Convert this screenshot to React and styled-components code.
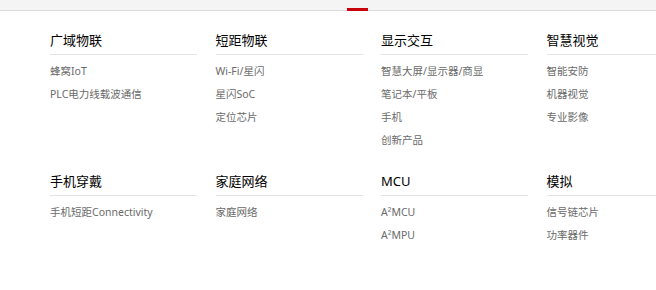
import React from "react";
import styled, { createGlobalStyle } from "styled-components";

const GlobalStyle = createGlobalStyle`
    html, body {
        margin: 0;
        padding: 0;
        background: #fff;
        font-family: "Noto Sans", "Noto Sans CJK SC", sans-serif;
    }
`;

const Page = styled.div`
    width: 656px;
    height: 290px;
    overflow: hidden;
    background: #fff;
`;

const TopBar = styled.div`
    position: relative;
    height: 10px;
    background: #f4f4f4;
    border-bottom: 1px solid #dcdcdc;
`;

const Indicator = styled.span`
    position: absolute;
    left: 347px;
    top: 8px;
    width: 21px;
    height: 3px;
    background: #c8000a;
`;

const Menu = styled.div`
    display: grid;
    grid-template-columns: repeat(4, 147px);
    column-gap: 18.5px;
    row-gap: 19px;
    padding: 19px 0 0 50px;
`;

const Column = styled.div`
    display: flex;
    flex-direction: column;
`;

const Title = styled.h3`
    margin: 0;
    padding-bottom: 4px;
    border-bottom: 1px solid #e4e4e4;
    font-size: 13px;
    line-height: 20px;
    font-weight: 400;
    color: #000;
    white-space: nowrap;
`;

const List = styled.ul`
    list-style: none;
    margin: 5px 0 0;
    padding: 0;
`;

const Item = styled.li`
    font-size: 10.5px;
    line-height: 23px;
    color: #6a6a6a;
    white-space: nowrap;
`;

const groups = [
    ["广域物联", ["蜂窝IoT", "PLC电力线载波通信"]],
    ["短距物联", ["Wi-Fi/星闪", "星闪SoC", "定位芯片"]],
    ["显示交互", ["智慧大屏/显示器/商显", "笔记本/平板", "手机", "创新产品"]],
    ["智慧视觉", ["智能安防", "机器视觉", "专业影像"]],
    ["手机穿戴", ["手机短距Connectivity"]],
    ["家庭网络", ["家庭网络"]],
    ["MCU", ["A²MCU", "A²MPU"]],
    ["模拟", ["信号链芯片", "功率器件"]],
];

export default function App() {
    return (
        <Page>
            <GlobalStyle />
            <TopBar>
                <Indicator />
            </TopBar>
            <Menu>
                {groups.map(([title, items]) => (
                    <Column key={title}>
                        <Title>{title}</Title>
                        <List>
                            {items.map(item => (
                                <Item key={item}>{item}</Item>
                            ))}
                        </List>
                    </Column>
                ))}
            </Menu>
        </Page>
    );
}
